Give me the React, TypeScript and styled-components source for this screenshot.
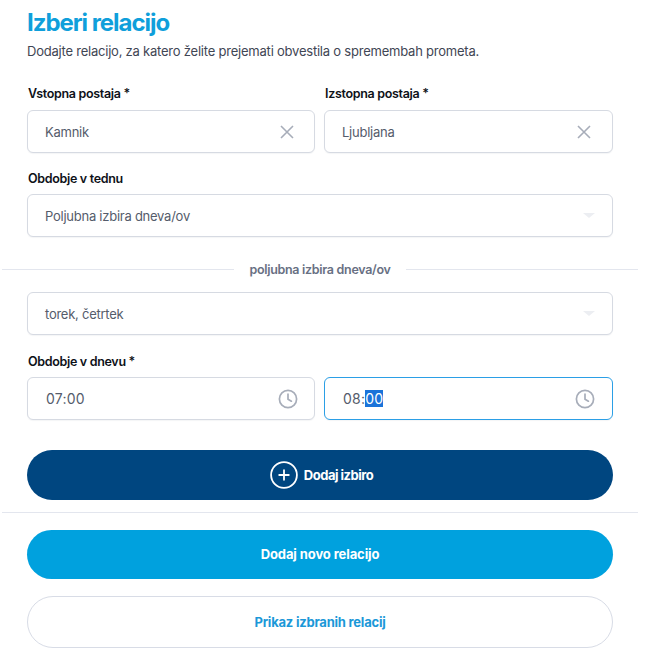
import React from "react";
import { createGlobalStyle, styled } from "styled-components";

const GlobalStyle = createGlobalStyle`
    html, body {
        margin: 0;
        padding: 0;
        background: #fff;
    }
    * {
        box-sizing: border-box;
    }
`;

const Page = styled.div`
    width: 636px;
    margin-left: 2px;
    font-family: Inter, "Noto Sans", sans-serif;
    display: flex;
    flex-direction: column;
`;

const Section = styled.div`
    padding: 0 25px;
    display: flex;
    flex-direction: column;
`;

const Title = styled.h1`
    margin: 8px 0 0;
    height: 30px;
    font-size: 24px;
    line-height: 30px;
    font-weight: 700;
    letter-spacing: -1.05px;
    color: #0f9fdb;
`;

const Subtitle = styled.p`
    margin: 5px 0 0;
    height: 16px;
    font-size: 13px;
    line-height: 16px;
    letter-spacing: -0.22px;
    color: #3f4654;
`;

const TwoColumns = styled.div<{ $top?: number }>`
    display: grid;
    grid-template-columns: 288px 289px;
    column-gap: 9px;
    margin-top: ${props => props.$top ?? 0}px;
`;

const Field = styled.div<{ $top?: number }>`
    display: flex;
    flex-direction: column;
    margin-top: ${props => props.$top ?? 0}px;
`;

const Label = styled.label<{ $gap?: number }>`
    height: 16px;
    margin: 0 0 ${props => props.$gap ?? 8}px 1px;
    font-size: 12.5px;
    line-height: 16px;
    font-weight: 600;
    letter-spacing: -0.32px;
    color: #0e1118;
`;

const Control = styled.div<{ $focused?: boolean; $end?: number }>`
    height: 43px;
    padding: 0 ${props => props.$end ?? 17}px 0 17px;
    display: flex;
    align-items: center;
    justify-content: space-between;
    background: #fff;
    border: 1px solid ${props => (props.$focused ? "#2b9fe6" : "#d6dae2")};
    border-radius: 6px;
    box-shadow: 0 1px 1px rgba(40, 50, 80, 0.05);
`;

const Value = styled.span`
    font-size: 13px;
    letter-spacing: -0.25px;
    color: #555c6b;
`;

const TimeValue = styled.span`
    font-size: 14px;
    letter-spacing: 0.2px;
    margin-left: 1px;
    color: #555c6b;
`;

const Selected = styled.span`
    background: #1a73d9;
    color: #fff;
`;

const Caret = styled.span`
    width: 0;
    height: 0;
    border-left: 6px solid transparent;
    border-right: 6px solid transparent;
    border-top: 5px solid #eceef2;
`;

const IconSlot = styled.span`
    display: flex;
    color: #a7adb9;
`;

const OrDivider = styled.div`
    margin-top: 24px;
    height: 16px;
    display: flex;
    align-items: center;
    gap: 15px;

    &::before,
    &::after {
        content: "";
        flex: 1;
        height: 1px;
        background: #e3e6ee;
    }
`;

const OrText = styled.span`
    font-size: 12.5px;
    font-weight: 600;
    letter-spacing: -0.3px;
    color: #687083;
`;

const Rule = styled.div`
    height: 1px;
    margin-top: 12px;
    background: #e3e6ee;
`;

const spacing = { navy: -0.5, sky: -0.1, outline: -0.22 };

const PillButton = styled.button<{ $variant: "navy" | "sky" | "outline"; $height: number; $top: number }>`
    width: 100%;
    height: ${props => props.$height}px;
    margin-top: ${props => props.$top}px;
    padding: 0 0 ${props => (props.$variant === "sky" ? 2 : 0)}px ${props => (props.$variant === "navy" ? 3 : 0)}px;
    display: flex;
    align-items: center;
    justify-content: center;
    gap: 6px;
    border-radius: 26px;
    font-family: inherit;
    font-size: 13px;
    font-weight: 700;
    letter-spacing: ${props => spacing[props.$variant]}px;
    cursor: pointer;
    color: ${props => (props.$variant === "outline" ? "#1b98d8" : "#fff")};
    background: ${props =>
        props.$variant === "navy" ? "#004680" : props.$variant === "sky" ? "#00a1de" : "#fff"};
    border: ${props => (props.$variant === "outline" ? "1px solid #d8dce6" : "none")};
`;

const ClearIcon = () => (
    <IconSlot>
        <svg width="16" height="16" viewBox="0 0 16 16" fill="none" stroke="currentColor" strokeWidth="1.6">
            <path d="M2 2 L14 14 M14 2 L2 14" />
        </svg>
    </IconSlot>
);

const ClockIcon = () => (
    <IconSlot>
        <svg width="20" height="20" viewBox="0 0 20 20" fill="none" stroke="currentColor" strokeWidth="1.7" strokeLinecap="round" strokeLinejoin="round">
            <circle cx="10" cy="10" r="8.6" />
            <path d="M10 5.2 V10.2 L13.4 12.2" />
        </svg>
    </IconSlot>
);

const PlusCircleIcon = () => (
    <svg width="28" height="28" viewBox="0 0 28 28" fill="none" stroke="#fff" strokeWidth="1.8" strokeLinecap="round">
        <circle cx="14" cy="14" r="12.9" />
        <path d="M14 9.2 V18.8 M9.2 14 H18.8" />
    </svg>
);

export default function App() {
    return (
        <>
            <GlobalStyle />
            <Page>
                <Section>
                    <Title>Izberi relacijo</Title>
                    <Subtitle>Dodajte relacijo, za katero želite prejemati obvestila o spremembah prometa.</Subtitle>
                    <TwoColumns $top={27}>
                        <Field>
                            <Label>Vstopna postaja *</Label>
                            <Control $end={19}>
                                <Value>Kamnik</Value>
                                <ClearIcon />
                            </Control>
                        </Field>
                        <Field>
                            <Label>Izstopna postaja *</Label>
                            <Control $end={20}>
                                <Value>Ljubljana</Value>
                                <ClearIcon />
                            </Control>
                        </Field>
                    </TwoColumns>
                    <Field $top={18}>
                        <Label $gap={7}>Obdobje v tednu</Label>
                        <Control>
                            <Value>Poljubna izbira dneva/ov</Value>
                            <Caret />
                        </Control>
                    </Field>
                </Section>

                <OrDivider>
                    <OrText>poljubna izbira dneva/ov</OrText>
                </OrDivider>

                <Section>
                    <Field $top={15}>
                        <Control>
                            <Value>torek, četrtek</Value>
                            <Caret />
                        </Control>
                    </Field>
                    <TwoColumns $top={19}>
                        <Field>
                            <Label $gap={7}>Obdobje v dnevu *</Label>
                            <Control $end={16}>
                                <TimeValue>07:00</TimeValue>
                                <ClockIcon />
                            </Control>
                        </Field>
                        <Field>
                            <Label $gap={7}>&nbsp;</Label>
                            <Control $focused>
                                <TimeValue>08:<Selected>00</Selected></TimeValue>
                                <ClockIcon />
                            </Control>
                        </Field>
                    </TwoColumns>
                    <PillButton $variant="navy" $height={50} $top={30}>
                        <PlusCircleIcon />
                        Dodaj izbiro
                    </PillButton>
                </Section>

                <Rule />

                <Section>
                    <PillButton $variant="sky" $height={49} $top={17}>Dodaj novo relacijo</PillButton>
                    <PillButton $variant="outline" $height={52} $top={17}>Prikaz izbranih relacij</PillButton>
                </Section>
            </Page>
        </>
    );
}
